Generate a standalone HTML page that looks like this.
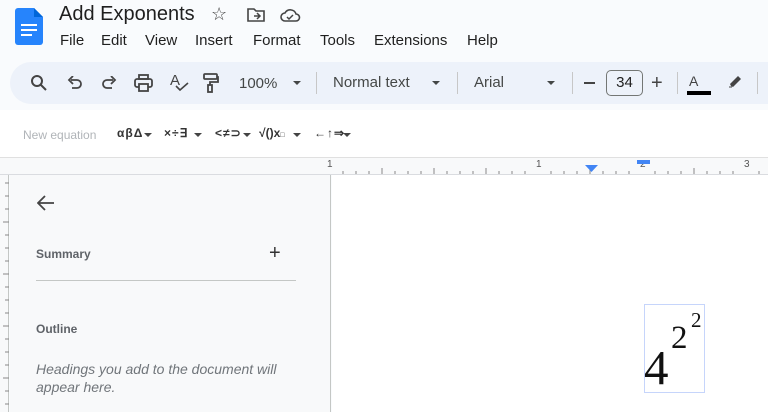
<!DOCTYPE html>
<html><head><meta charset="utf-8"><style>
*{margin:0;padding:0;box-sizing:border-box}
body{width:768px;height:412px;overflow:hidden;background:#f9fbfd;font-family:"Liberation Sans",sans-serif;position:relative;color:#444746}
.a{position:absolute;white-space:nowrap}
.tb{position:absolute;left:10px;top:62px;width:800px;height:42px;background:#edf2fa;border-radius:21px}
.sep{position:absolute;top:72px;width:1px;height:22px;background:#c7c7c7}
.tri{position:absolute;width:0;height:0;border-left:4px solid transparent;border-right:4px solid transparent;border-top:4px solid #444746}
.eq{font-size:12px;color:#333;font-weight:bold;letter-spacing:1px;top:126px}
.et{position:absolute;top:133px;width:0;height:0;border-left:4px solid transparent;border-right:4px solid transparent;border-top:4px solid #444}
</style></head><body>
<svg class="a" style="left:15px;top:8px" width="28" height="37" viewBox="0 0 28 37"><path d="M3 0h16l9 9v25a3 3 0 0 1-3 3H3a3 3 0 0 1-3-3V3a3 3 0 0 1 3-3z" fill="#2684fc"/><path d="M19 0l9 9h-9z" fill="#0066da"/><rect x="6" y="16" width="16" height="2" fill="#fff"/><rect x="6" y="21" width="16" height="2" fill="#fff"/><rect x="6" y="26" width="11" height="2" fill="#fff"/></svg>
<div class="a" style="left:59px;top:3px;font-size:20px;color:#1f1f1f">Add Exponents</div>
<div class="a" style="left:211px;top:4px;font-size:18px;color:#444">☆</div>
<svg class="a" style="left:246px;top:7px" width="20" height="16" viewBox="0 0 20 16"><path d="M2 2h6l2 2h8v10H2z" fill="none" stroke="#444" stroke-width="1.6"/><path d="M8 9h6M11 6l3 3-3 3" fill="none" stroke="#444" stroke-width="1.5"/></svg>
<svg class="a" style="left:279px;top:7px" width="22" height="16" viewBox="0 0 22 16"><path d="M6 14a4 4 0 0 1 0-8 6 6 0 0 1 11 1 3.5 3.5 0 0 1 0 7z" fill="none" stroke="#444" stroke-width="1.6"/><path d="M8 10l2 2 4-4" fill="none" stroke="#444" stroke-width="1.5"/></svg>
<div class="a" style="top:32px;font-size:15px;color:#1f1f1f;left:0">
<span class="a" style="left:60px">File</span><span class="a" style="left:101px">Edit</span><span class="a" style="left:145px">View</span><span class="a" style="left:195px">Insert</span><span class="a" style="left:253px">Format</span><span class="a" style="left:320px">Tools</span><span class="a" style="left:374px">Extensions</span><span class="a" style="left:467px">Help</span></div>
<div class="tb"></div>
<svg class="a" style="left:30px;top:74px" width="18" height="18" viewBox="0 0 18 18"><circle cx="7" cy="7" r="5" fill="none" stroke="#444" stroke-width="2"/><path d="M11 11l5 5" stroke="#444" stroke-width="2"/></svg>
<svg class="a" style="left:67px;top:76px" width="16" height="14" viewBox="0 0 16 14"><path d="M4 4h6a4 4 0 0 1 0 8H5" fill="none" stroke="#444" stroke-width="1.8"/><path d="M6 0L2 4l4 4" fill="none" stroke="#444" stroke-width="1.8"/></svg>
<svg class="a" style="left:101px;top:76px" width="16" height="14" viewBox="0 0 16 14"><path d="M12 4H6a4 4 0 0 0 0 8h5" fill="none" stroke="#444" stroke-width="1.8"/><path d="M10 0l4 4-4 4" fill="none" stroke="#444" stroke-width="1.8"/></svg>
<svg class="a" style="left:134px;top:74px" width="19" height="18" viewBox="0 0 19 18"><rect x="5" y="1" width="9" height="4" fill="none" stroke="#444" stroke-width="1.8"/><rect x="1" y="5" width="17" height="8" rx="2" fill="none" stroke="#444" stroke-width="1.8"/><rect x="5" y="10" width="9" height="7" fill="#edf2fa" stroke="#444" stroke-width="1.8"/></svg>
<div class="a" style="left:170px;top:72px;font-size:15px;color:#444">A</div>
<svg class="a" style="left:175px;top:82px" width="14" height="10" viewBox="0 0 14 10"><path d="M1 4l4 4 8-7" fill="none" stroke="#444" stroke-width="1.6"/></svg>
<svg class="a" style="left:203px;top:73px" width="16" height="20" viewBox="0 0 16 20"><rect x="1" y="1" width="13" height="5" rx="1" fill="none" stroke="#444" stroke-width="1.8"/><path d="M14 4h1v5H7v3" fill="none" stroke="#444" stroke-width="1.8"/><rect x="5" y="12" width="4" height="7" fill="none" stroke="#444" stroke-width="1.8"/></svg>
<div class="a" style="left:239px;top:75px;font-size:15px">100%</div>
<div class="tri" style="left:293px;top:81px"></div>
<div class="sep" style="left:316px"></div>
<div class="a" style="left:333px;top:74px;font-size:15px">Normal text</div>
<div class="tri" style="left:432px;top:81px"></div>
<div class="sep" style="left:457px"></div>
<div class="a" style="left:474px;top:74px;font-size:15px">Arial</div>
<div class="tri" style="left:547px;top:81px"></div>
<div class="sep" style="left:572px"></div>
<div class="a" style="left:584px;top:82px;width:11px;height:2px;background:#444"></div>
<div class="a" style="left:606px;top:70px;width:37px;height:26px;border:1px solid #747775;border-radius:5px;font-size:15px;text-align:center;line-height:24px;color:#1f1f1f">34</div>
<div class="a" style="left:651px;top:72px;font-size:20px;color:#444">+</div>
<div class="sep" style="left:677px"></div>
<div class="a" style="left:689px;top:73px;font-size:14px;color:#444">A</div>
<div class="a" style="left:687px;top:91px;width:24px;height:4px;background:#000"></div>
<svg class="a" style="left:728px;top:74px" width="16" height="14" viewBox="0 0 16 14"><path d="M3 12l-1-2 8-8 3 3-8 8z" fill="#444"/><path d="M1 13h3" stroke="#444"/></svg>
<div class="sep" style="left:757px"></div>
<div class="a" style="left:0;top:110px;width:768px;height:47px;background:#fff"></div>
<div class="a" style="left:23px;top:128px;font-size:12px;color:#b0b4b8">New equation</div>
<div class="a eq" style="left:117px">αβΔ</div><div class="et" style="left:144px"></div>
<div class="a eq" style="left:164px">×÷∃</div><div class="et" style="left:194px"></div>
<div class="a eq" style="left:215px">&lt;≠⊃</div><div class="et" style="left:243px"></div>
<div class="a eq" style="left:259px;letter-spacing:0">√()x<span style="font-size:7px">□</span></div><div class="et" style="left:293px"></div>
<div class="a eq" style="left:314px">←↑⇒</div><div class="et" style="left:343px"></div>
<div class="a" style="left:0;top:157px;width:768px;height:1px;background:#e0e0e0"></div>
<div class="a" style="left:0;top:158px;width:768px;height:16px;background:#f8f9fa"></div>
<svg class="a" style="left:0;top:158px" width="768" height="17">
<g stroke="#888" stroke-width="1">
<path d="M343 13v3M356 13v3M369 13v3M382 10v6M395 13v3M408 13v3M421 13v3M447 13v3M460 13v3M473 13v3M486 10v6M499 13v3M512 13v3M525 13v3M551 13v3M564 13v3M577 13v3M590 10v6M603 13v3M616 13v3M629 13v3M655 13v3M668 13v3M681 13v3M694 10v6M707 13v3M720 13v3M733 13v3M759 13v3M434 10v6"/>
</g>
<text x="327" y="9" font-size="10" font-family="Liberation Sans" fill="#555">1</text>
<text x="536" y="9" font-size="10" font-family="Liberation Sans" fill="#555">1</text>
<text x="640" y="9" font-size="10" font-family="Liberation Sans" fill="#555">2</text>
<text x="744" y="9" font-size="10" font-family="Liberation Sans" fill="#555">3</text>
<path d="M585 7h13l-6.5 7z" fill="#4285f4"/>
<rect x="637" y="2" width="13" height="4" fill="#4285f4"/>
</svg>
<div class="a" style="left:0;top:174px;width:768px;height:1px;background:#dadce0"></div>
<div class="a" style="left:0;top:175px;width:9px;height:237px;background:#f8f9fa;border-right:1px solid #c4c7c5"></div>
<svg class="a" style="left:0;top:175px" width="9" height="237"><g stroke="#888"><path d="M5 8h4M5 21h4M5 34h4M3 47h6M5 60h4M5 73h4M5 86h4M3 99h6M5 112h4M5 125h4M5 138h4M3 151h6M5 164h4M5 177h4M5 190h4M3 203h6M5 216h4M5 229h4"/></g></svg>
<div class="a" style="left:10px;top:175px;width:321px;height:237px;background:#f8f9fa;border-right:1px solid #c4c7c5"></div>
<svg class="a" style="left:37px;top:195px" width="18" height="16" viewBox="0 0 18 16"><path d="M17 8H2M8 1L1 8l7 7" fill="none" stroke="#444" stroke-width="1.8"/></svg>
<div class="a" style="left:36px;top:247px;font-size:12px;font-weight:bold;color:#5f6368">Summary</div>
<div class="a" style="left:269px;top:242px;font-size:20px;color:#333">+</div>
<div class="a" style="left:36px;top:280px;width:260px;height:1px;background:#c4c7c5"></div>
<div class="a" style="left:36px;top:322px;font-size:12px;font-weight:bold;color:#5f6368">Outline</div>
<div class="a" style="left:36px;top:360px;font-size:14px;font-style:italic;color:#70757a;line-height:18px;white-space:normal;width:270px">Headings you add to the document will appear here.</div>
<div class="a" style="left:332px;top:175px;width:436px;height:237px;background:#fff"></div>
<div class="a" style="left:644px;top:304px;width:61px;height:89px;border:1px solid #c6d5fb"></div>
<div class="a" style="left:644px;top:339px;font-family:'Liberation Serif',serif;font-size:49px;color:#111">4</div>
<div class="a" style="left:671px;top:320px;font-family:'Liberation Serif',serif;font-size:33px;color:#111">2</div>
<div class="a" style="left:691px;top:308px;font-family:'Liberation Serif',serif;font-size:21px;color:#111">2</div>
</body></html>
